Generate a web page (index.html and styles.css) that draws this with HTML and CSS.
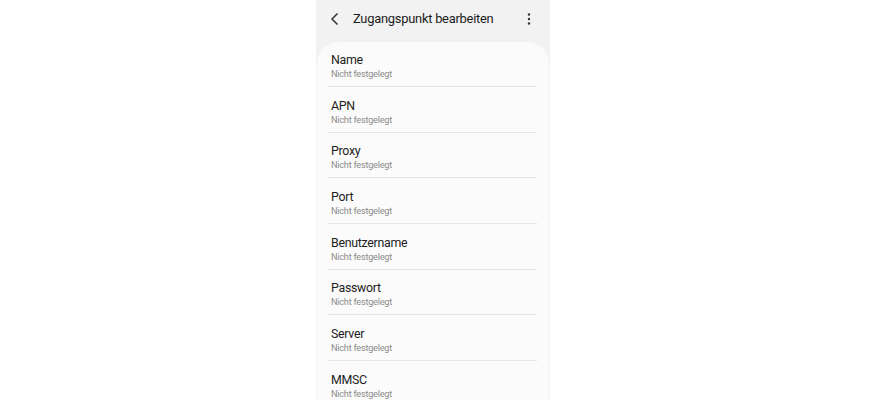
FILE: index.html
```html
<!DOCTYPE html>
<html lang="de">
<head>
<meta charset="utf-8">
<link rel="stylesheet" href="styles.css">
</head>
<body>
<div class="phone">
  <header class="bar">
    <svg class="back" width="10" height="14" viewBox="0 0 10 14"><path d="M7.5 1.5 L2 7 L7.5 12.5" fill="none" stroke="#333" stroke-width="1.5"/></svg>
    <h1 class="title">Zugangspunkt bearbeiten</h1>
    <svg class="more" width="4" height="12" viewBox="0 0 4 12"><circle cx="2" cy="1.5" r="1.2" fill="#333"/><circle cx="2" cy="6" r="1.2" fill="#333"/><circle cx="2" cy="10.5" r="1.2" fill="#333"/></svg>
  </header>
  <ul class="card">
    <li class="item"><span class="label">Name</span><span class="value">Nicht festgelegt</span></li>
    <li class="item"><span class="label">APN</span><span class="value">Nicht festgelegt</span></li>
    <li class="item"><span class="label">Proxy</span><span class="value">Nicht festgelegt</span></li>
    <li class="item"><span class="label">Port</span><span class="value">Nicht festgelegt</span></li>
    <li class="item"><span class="label">Benutzername</span><span class="value">Nicht festgelegt</span></li>
    <li class="item"><span class="label">Passwort</span><span class="value">Nicht festgelegt</span></li>
    <li class="item"><span class="label">Server</span><span class="value">Nicht festgelegt</span></li>
    <li class="item"><span class="label">MMSC</span><span class="value">Nicht festgelegt</span></li>
  </ul>
</div>
</body>
</html>
```
FILE: styles.css
```css
html, body {
  margin: 0;
  padding: 0;
  background: #ffffff;
  height: 400px;
  overflow: hidden;
}
body {
  font-family: Roboto, "Noto Sans", sans-serif;
}
.phone {
  margin-left: 316px;
  width: 234px;
  height: 400px;
  background: #f2f2f2;
  display: flex;
  flex-direction: column;
  overflow: hidden;
}
.bar {
  height: 41.5px;
  flex-shrink: 0;
  display: flex;
  align-items: center;
  padding: 0 0 4.5px 0;
  box-sizing: border-box;
}
.back {
  margin-left: 14px;
  display: block;
}
.title {
  margin: 0 0 0 13px;
  font-size: 12.9px;
  font-weight: 400;
  color: #1c1c1c;
  flex: 1;
  letter-spacing: -0.25px;
}
.more {
  margin-right: 19px;
  display: block;
}
.card {
  list-style: none;
  margin: 0 1px;
  padding: 0;
  background: #fbfbfb;
  border-radius: 22px 22px 0 0;
  flex: 1 0 auto;
}
.item {
  height: 45.67px;
  box-sizing: border-box;
  padding: 10.5px 0 0 3px;
  margin: 0 12px 0 11px;
  border-bottom: 1px solid #e6e6e6;
  display: flex;
  flex-direction: column;
}
.label {
  font-size: 12.4px;
  line-height: 16px;
  color: #1e1e1e;
  letter-spacing: -0.3px;
}
.value {
  font-size: 9.2px;
  line-height: 12px;
  color: #8c8c8c;
  letter-spacing: -0.25px;
}
```
